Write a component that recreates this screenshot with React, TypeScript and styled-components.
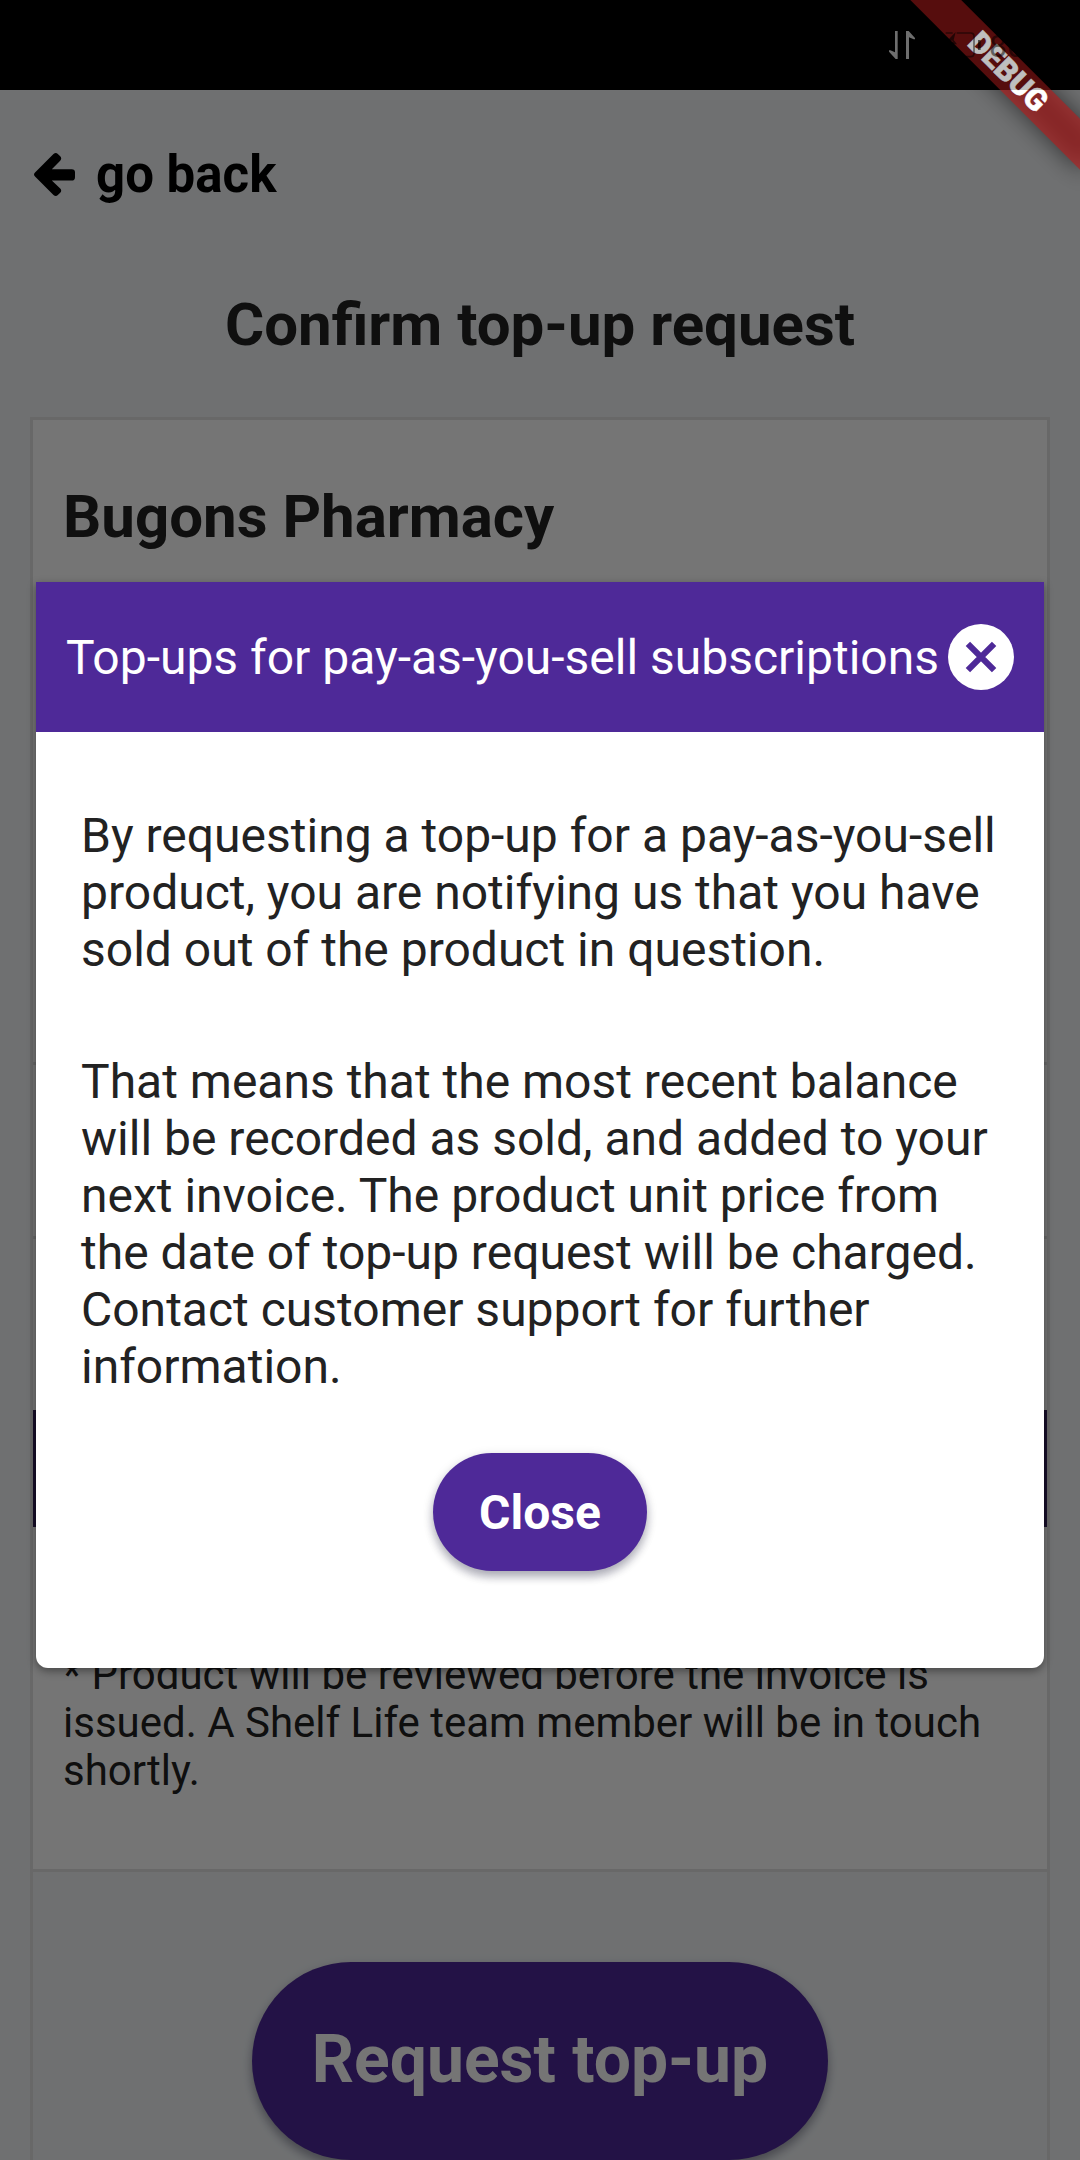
import React from "react";
import styled, { createGlobalStyle } from "styled-components";

const GlobalStyle = createGlobalStyle`
  *, *::before, *::after { box-sizing: border-box; }
  body { margin: 0; background: #000; }
  h1, h2, p { margin: 0; }
  button { border: 0; font: inherit; }
`;

const purple = "#4e2998";

const Screen = styled.div`
  position: relative;
  width: 1080px;
  height: 2160px;
  overflow: hidden;
  display: flex;
  flex-direction: column;
  background: #f1f4f7;
  color: #222;
  font-family: Roboto, sans-serif;
`;

const StatusBackdrop = styled.div`
  height: 90px;
  flex: none;
  background: #000;
`;

const BackLink = styled.a`
  display: flex;
  align-items: center;
  gap: 21px;
  height: 168px;
  padding-left: 34px;
  color: #000;
  font-size: 51px;
  font-weight: 700;
  line-height: 60px;
`;

const BackLabel = styled.span`
  padding-top: 2px;
`;

const PageTitle = styled.h1`
  height: 159px;
  padding-top: 32px;
  font-size: 60px;
  font-weight: 700;
  line-height: 70px;
  text-align: center;
`;

const Card = styled.section`
  flex: 1 0 auto;
  display: flex;
  flex-direction: column;
  margin: 0 30px;
  border: 3px solid #e2e2e2;
  border-bottom: 0;
`;

const CardRow = styled.div<{ $height: number }>`
  height: ${(p) => p.$height}px;
  background: #fff;
  border-bottom: 3px solid #e2e2e2;
`;

const PharmacyName = styled.h2`
  padding: 62px 30px 0;
  font-size: 60px;
  font-weight: 700;
  line-height: 70px;
`;

const SummaryGap = styled.div`
  height: 171px;
  background: #fff;
`;

const SummaryBand = styled.div`
  height: 117px;
  background: #341f58;
`;

const ReviewNote = styled.p`
  height: 345px;
  padding: 124px 30px 0;
  background: #fff;
  border-bottom: 3px solid #e2e2e2;
  font-size: 42px;
  line-height: 48px;
`;

const RequestArea = styled.div`
  display: flex;
  justify-content: center;
  padding-top: 90px;
`;

const PillButton = styled.button<{ $large?: boolean }>`
  display: flex;
  align-items: center;
  justify-content: center;
  width: ${(p) => (p.$large ? 576 : 213.5)}px;
  height: ${(p) => (p.$large ? 198 : 117.5)}px;
  padding: ${(p) => (p.$large ? "0 0 3px" : "1px 0 0")};
  border-radius: 99px;
  background: ${purple};
  color: #fff;
  font-size: ${(p) => (p.$large ? 66 : 48)}px;
  font-weight: 700;
  box-shadow: 0 6px 9px rgba(20, 20, 50, 0.28), 0 3px 12px rgba(20, 20, 50, 0.14);
`;

const Scrim = styled.div`
  position: absolute;
  inset: 0;
  display: flex;
  justify-content: center;
  align-items: flex-start;
  padding-top: 582px;
  background: rgba(0, 0, 0, 0.54);
`;

const Dialog = styled.div`
  width: 1008px;
  height: 1086px;
  display: flex;
  flex-direction: column;
  background: #fff;
  border-radius: 0 0 12px 12px;
  box-shadow: 0 3px 9px rgba(0, 0, 0, 0.4);
`;

const DialogHeader = styled.header`
  display: flex;
  align-items: center;
  justify-content: space-between;
  height: 150px;
  padding: 0 30px;
  background: ${purple};
  color: #fff;
  font-size: 48px;
  white-space: nowrap;
`;

const CloseIcon = styled.button`
  display: flex;
  align-items: center;
  justify-content: center;
  flex: none;
  width: 66px;
  height: 66px;
  padding: 0;
  border-radius: 50%;
  background: #fff;
`;

const DialogBody = styled.div`
  display: flex;
  flex-direction: column;
  gap: 75px;
  padding: 75px 0 0 45px;
  font-size: 48px;
  line-height: 57px;
  white-space: nowrap;
`;

const DialogActions = styled.div`
  display: flex;
  justify-content: center;
  padding-top: 58px;
`;

const BannerLayer = styled.div`
  position: absolute;
  top: 84px;
  left: 960px;
  width: 240px;
  height: 36px;
  transform-origin: 120px -84px;
  transform: rotate(45deg);
`;

const BannerShadow = styled.div`
  position: absolute;
  inset: 0;
  background: rgba(0, 0, 0, 0.55);
  filter: blur(12px);
`;

const BannerLabel = styled.div`
  position: relative;
  height: 36px;
  background: rgba(183, 28, 28, 0.627);
  color: #fff;
  font-size: 30.6px;
  font-weight: 900;
  line-height: 36px;
  text-align: center;
  -webkit-text-stroke: 0.6px #fff;
`;

const StatusBar = styled.div`
  position: absolute;
  inset: 0 0 auto 0;
  height: 90px;
  display: flex;
  background: rgba(0, 0, 0, 0.25);
`;

const StatusIcons = styled.svg`
  flex: none;
  margin-left: 860px;
`;

const BatteryLevel = styled.span`
  margin-left: 8px;
  padding-top: 27px;
  color: rgba(0, 0, 0, 0.5);
  font-size: 32px;
  line-height: 38px;
`;

export default function App() {
  return (
    <>
      <GlobalStyle />
      <Screen>
        <StatusBackdrop />
        <BackLink>
          <svg width="41" height="43" viewBox="0 0 122 128">
            <path d="M3 58 58 3Q65-3 71 3L78 10Q84 16 78 23L53 48H112Q122 48 122 57V72Q122 82 112 82H53L78 106Q84 112 78 118L71 125Q65 131 58 125L3 70Q-3 64 3 58Z" />
          </svg>
          <BackLabel>go back</BackLabel>
        </BackLink>
        <PageTitle>Confirm top-up request</PageTitle>
        <Card>
          <CardRow $height={645}>
            <PharmacyName>Bugons Pharmacy</PharmacyName>
          </CardRow>
          <CardRow $height={174} />
          <SummaryGap />
          <SummaryBand />
          <ReviewNote>
            * Product will be reviewed before the invoice is
            <br />
            issued. A Shelf Life team member will be in touch
            <br />
            shortly.
          </ReviewNote>
          <RequestArea>
            <PillButton $large>Request top-up</PillButton>
          </RequestArea>
        </Card>
        <Scrim>
          <Dialog role="dialog">
            <DialogHeader>
              <span>Top-ups for pay-as-you-sell subscriptions</span>
              <CloseIcon aria-label="Close dialog">
                <svg width="32" height="32" viewBox="0 0 32 32" stroke={purple} strokeWidth="6.2">
                  <path d="M2.9 2.9 29.1 29.1M29.1 2.9 2.9 29.1" />
                </svg>
              </CloseIcon>
            </DialogHeader>
            <DialogBody>
              <p>
                By requesting a top-up for a pay-as-you-sell
                <br />
                product, you are notifying us that you have
                <br />
                sold out of the product in question.
              </p>
              <p>
                That means that the most recent balance
                <br />
                will be recorded as sold, and added to your
                <br />
                next invoice. The product unit price from
                <br />
                the date of top-up request will be charged.
                <br />
                Contact customer support for further
                <br />
                information.
              </p>
            </DialogBody>
            <DialogActions>
              <PillButton>Close</PillButton>
            </DialogActions>
          </Dialog>
        </Scrim>
        <BannerLayer>
          <BannerShadow />
          <BannerLabel>DEBUG</BannerLabel>
        </BannerLayer>
        <StatusBar>
          <StatusIcons width="121" height="90" viewBox="0 0 363 270">
            <path fill="#6e6e6e" d="M105 93H113V177H107L87 155V151H91L105 157ZM138 93H146L165 114V118H161L147 112V177H138Z" />
            <g fill="none" stroke="rgba(0,0,0,0.5)" strokeWidth="5">
              <path d="M257 99H278M290 99H332Q342 99 342 109V160Q342 170 332 170H318" />
              <path fill="rgba(0,0,0,0.6)" stroke="none" d="M287 96 262 122H278L275 133 291 133 281 120ZM354 120H362V150H354Z" />
            </g>
          </StatusIcons>
          <BatteryLevel>80</BatteryLevel>
        </StatusBar>
      </Screen>
    </>
  );
}
